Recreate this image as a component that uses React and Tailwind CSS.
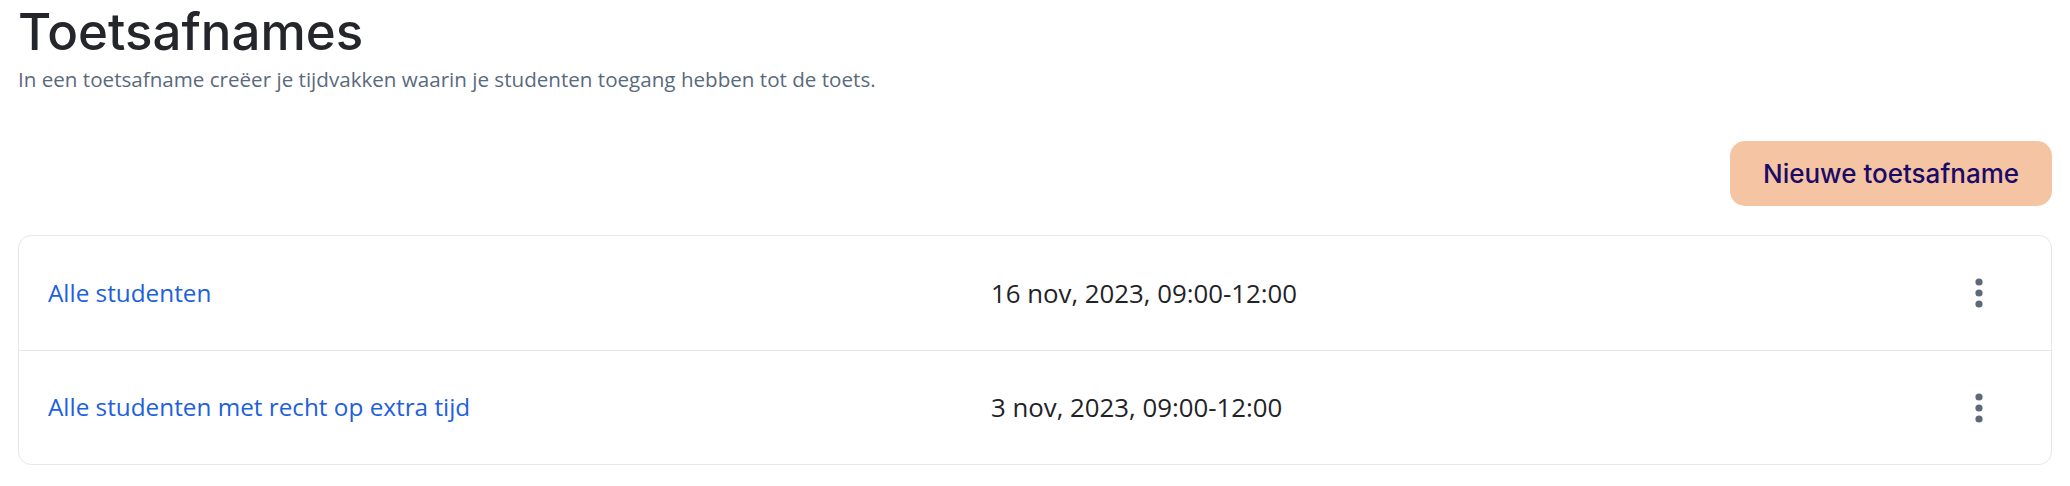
const afnames = [
  { name: 'Alle studenten', date: '16 nov, 2023, 09:00-12:00' },
  { name: 'Alle studenten met recht op extra tijd', date: '3 nov, 2023, 09:00-12:00' },
]

function Dots() {
  return (
    <svg width="8" height="30" viewBox="0 0 8 30" className="text-[#5d6878]">
      <circle cx="4" cy="4" r="3.6" fill="currentColor" />
      <circle cx="4" cy="15" r="3.6" fill="currentColor" />
      <circle cx="4" cy="26" r="3.6" fill="currentColor" />
    </svg>
  )
}

export default function App() {
  return (
    <div className="pl-[18px] pr-[18px] pt-[2px] bg-white font-['Open_Sans',sans-serif]">
      <h1 className="font-['Inter',sans-serif] text-[51px] leading-[60px] font-medium text-[#24262b]">
        Toetsafnames
      </h1>
      <p className="mt-[3px] text-[20.6px] leading-[28px] text-[#5a6a7d]">
        In een toetsafname creëer je tijdvakken waarin je studenten toegang hebben tot de toets.
      </p>

      <div className="mt-[48px] flex justify-end">
        <button className="h-[65px] w-[322px] rounded-[15px] bg-[#f5c4a2] font-['Inter',sans-serif] text-[26px] font-medium text-[#1a0b68]">
          Nieuwe toetsafname
        </button>
      </div>

      <div className="mt-[29px] rounded-[13px] border border-[#e5e7eb]">
        {afnames.map((a, i) => (
          <div
            key={a.name}
            className={`flex h-[114px] items-center pl-[29px] ${i > 0 ? 'border-t border-[#e5e7eb]' : ''}`}
          >
            <a href="#" className="w-[943px] text-[24.3px] text-[#2160dc]">
              {a.name}
            </a>
            <span className="flex-1 text-[25.8px] text-[#1f2328]">{a.date}</span>
            <button className="mr-[68px] flex items-center">
              <Dots />
            </button>
          </div>
        ))}
      </div>
    </div>
  )
}
